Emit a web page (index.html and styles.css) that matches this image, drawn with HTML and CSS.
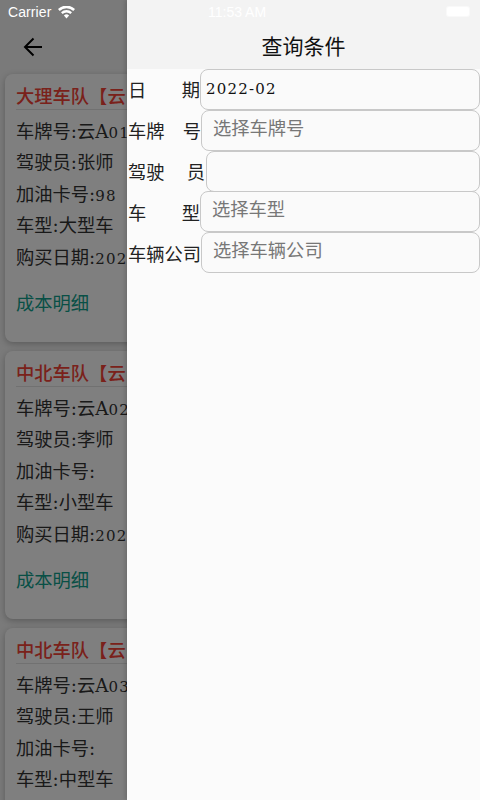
FILE: index.html
```html
<!DOCTYPE html>
<html lang="zh">
<head>
<meta charset="utf-8">
<title>查询条件</title>
<link rel="stylesheet" href="styles.css">
</head>
<body>
<div class="page">
  <header class="appbar">
    <svg class="back" width="20" height="20" viewBox="0 0 20 20"><path d="M19 10H2M10.500 1.500 2 10l8.500 8.500" fill="none" stroke="#000" stroke-width="2"/></svg>
  </header>
  <main class="list">
    <article class="card">
      <h2 class="card-title">大理车队【云</h2>
      <p class="row">车牌号:云A<span class="num">01</span></p>
      <p class="row">驾驶员:张师</p>
      <p class="row">加油卡号:<span class="num">98</span></p>
      <p class="row">车型:大型车</p>
      <p class="row">购买日期:<span class="num">202</span></p>
      <p class="link">成本明细</p>
    </article>
    <article class="card">
      <h2 class="card-title">中北车队【云</h2>
      <p class="row">车牌号:云A<span class="num">02</span></p>
      <p class="row">驾驶员:李师</p>
      <p class="row">加油卡号:</p>
      <p class="row">车型:小型车</p>
      <p class="row">购买日期:<span class="num">202</span></p>
      <p class="link">成本明细</p>
    </article>
    <article class="card">
      <h2 class="card-title">中北车队【云</h2>
      <p class="row">车牌号:云A<span class="num">03</span></p>
      <p class="row">驾驶员:王师</p>
      <p class="row">加油卡号:</p>
      <p class="row">车型:中型车</p>
    </article>
  </main>
</div>
<div class="scrim"></div>
<aside class="drawer">
  <div class="drawer-head"><h1 class="drawer-title">查询条件</h1></div>
  <form class="form">
    <div class="field"><label class="label w72"><span>日</span><span>期</span></label><div class="input value"><span class="num">2022-02</span></div></div>
    <div class="field"><label class="label w73"><span>车牌</span><span>号</span></label><div class="input ph">选择车牌号</div></div>
    <div class="field"><label class="label w76"><span>驾驶</span><span>员</span></label><div class="input"></div></div>
    <div class="field"><label class="label w72"><span>车</span><span>型</span></label><div class="input ph">选择车型</div></div>
    <div class="field"><label class="label w73"><span>车辆公司</span></label><div class="input ph">选择车辆公司</div></div>
  </form>
</aside>
<div class="status">
  <div class="carrier">Carrier
    <svg class="wifi" width="17" height="13" viewBox="0 0 17 13"><path d="M8.500 12.500 5.900 9.500a3.800 3.800 0 0 1 5.200 0zM4.600 8.100 3 6.300a8 8 0 0 1 11 0l-1.600 1.800a5.600 5.600 0 0 0-7.800 0zM1.700 4.900 0 3a12.300 12.300 0 0 1 17 0l-1.700 1.900a9.900 9.900 0 0 0-13.600 0z" fill="#fff"/></svg>
  </div>
  <div class="time">11:53 AM</div>
  <div class="battery"><span class="cell"></span></div>
</div>
</body>
</html>
```
FILE: styles.css
```css
* { box-sizing: border-box; }
html, body { margin: 0; height: 100%; }
body {
  width: 480px;
  height: 800px;
  overflow: hidden;
  position: relative;
  background: #f4f4f4;
  font-family: "DejaVu Serif", "Noto Sans CJK SC", serif;
  color: #333;
}
.num { font-family: "DejaVu Serif", serif; font-size: 15px; letter-spacing: 1.200px; }
.page { height: 800px; overflow: hidden; }
.appbar { height: 69px; padding: 37px 0 0 23px; background: #f5f5f5; }
.back { display: block; }
.list { padding: 5px 0 0 5px; width: 300px; display: flex; flex-direction: column; gap: 9px; }
.card {
  background: #fff;
  border-radius: 8px;
  height: 268px;
  padding: 10px 0 0 11px;
  box-shadow: 0 2px 6px rgba(0,0,0,.25);
  flex: none;
}
.card-title {
  margin: 0 0 7px;
  height: 26px;
  font-family: "Noto Sans CJK SC", sans-serif;
  font-size: 18.300px;
  line-height: 22px;
  font-weight: 500;
  color: #f44336;
  border-bottom: 1px solid #e2e2e2;
  white-space: nowrap;
}
.row { margin: 0; height: 31.400px; font-size: 18.300px; line-height: 30px; white-space: nowrap; color: #333; }
.link { margin: 14px 0 0; font-size: 18.300px; line-height: 31px; color: #10a08c; }
.scrim { position: absolute; inset: 0; background: rgba(0,0,0,.5); }
.drawer {
  position: absolute;
  top: 0; right: 0; bottom: 0;
  width: 353px;
  background: #fbfbfb;
  box-shadow: -2px 0 4px rgba(0,0,0,.15);
}
.drawer-head { height: 69px; padding-top: 33px; background: #f3f3f3; }
.drawer-title { margin: 0; text-align: center; font-size: 21px; line-height: 28px; font-weight: 400; color: #111; }
.form { display: flex; flex-direction: column; }
.field { display: flex; height: 40.800px; }
.label { flex: none; display: flex; justify-content: space-between; align-items: center; padding: 0 0 0 1px; font-size: 18.300px; color: #222; white-space: nowrap; }
.w72 { width: 73px; }
.w73 { width: 74px; }
.w76 { width: 79px; padding-right: 1px; }
.input {
  flex: 1;
  min-width: 0;
  height: 41px;
  border: 1px solid #c8c8c8;
  border-radius: 8px;
  background: #fafafa;
  font-size: 18.300px;
  line-height: 36px;
  padding: 0 11px;
}
.value { padding-left: 5px; color: #111; }
.ph { color: #777; }
.status { position: absolute; top: 0; left: 0; width: 480px; height: 24px; color: #fff; font-family: "Liberation Sans", sans-serif; font-size: 14px; }
.carrier { position: absolute; left: 8px; top: 3px; line-height: 18px; display: flex; gap: 7px; align-items: center; letter-spacing: .1px; }
.time { position: absolute; left: 208px; top: 3px; line-height: 18px; }
.battery { position: absolute; left: 446px; top: 6px; width: 24px; height: 11px; border-radius: 3px; padding: 1px; background: rgba(255,255,255,.5); }
.cell { display: block; height: 100%; background: #fff; border-radius: 2px; }
```
